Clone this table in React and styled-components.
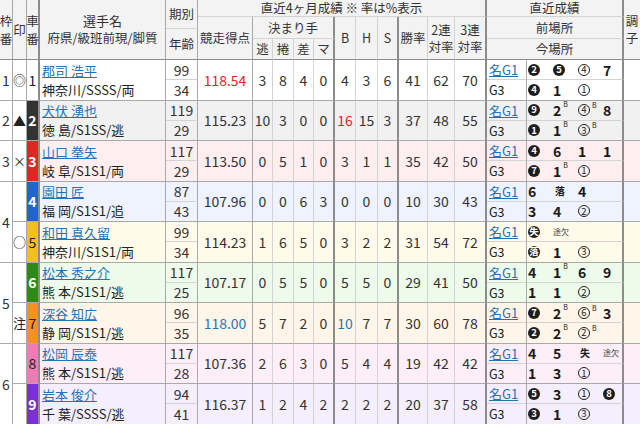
import React from 'react';
import styled, { createGlobalStyle } from 'styled-components';

const GlobalStyle = createGlobalStyle`
  html, body { margin: 0; padding: 0; background: #fff; }
  body { font-family: "Noto Sans CJK JP", "Noto Sans", sans-serif; }
`;

const LINES = { dark: '#8c8c8c', mid: '#a9a9a9', light: '#d3d3d3', none: 'transparent' };

// right border depends on which column the cell ends in
const rightLine = (col) => {
    if ([3, 10, 13, 16, 18].includes(col)) return `2px solid ${LINES.dark}`;
    if ([1, 2, 4, 5, 6, 17].includes(col)) return `1px solid ${LINES.mid}`;
    if (col === 19) return 'none';
    return `1px solid ${LINES.light}`;
};

const CAR = {
    1: { bg: '#ffffff', fg: '#222', bold: false },
    2: { bg: '#333333', fg: '#fff', bold: true },
    3: { bg: '#e3261f', fg: '#fff', bold: true },
    4: { bg: '#2363d1', fg: '#fff', bold: true },
    5: { bg: '#f3c21a', fg: '#222', bold: false },
    6: { bg: '#2e8a17', fg: '#fff', bold: true },
    7: { bg: '#f5931e', fg: '#222', bold: false },
    8: { bg: '#f07cb6', fg: '#222', bold: false },
    9: { bg: '#7a30d2', fg: '#fff', bold: true },
};

const ROW_BG = ['#ffffff', '#f1f1f1', '#ffeef0', '#eef3ff', '#fffaea', '#eefaea', '#fff5e8', '#fdeef7', '#f4eefd'];

const racers = [
    { mark: '◎', name: '郡司 浩平', info: '神奈川/SSSS/両', ki: 99, age: 34, score: '118.54', tone: 'red', kimari: [3, 8, 4, 0], bhs: [4, 3, 6], rates: [41, 62, 70],
      prev: ['●2', '●5', '○4', '7'], cur: ['●4', '1', '○1'] },
    { mark: '▲', name: '犬伏 湧也', info: '徳 島/S1SS/逃', ki: 119, age: 29, score: '115.23', kimari: [10, 3, 0, 0], bhs: [16, 15, 3], bTone: 'red', rates: [37, 48, 55],
      prev: ['●9', '2B', '○4B', '8'], cur: ['●1', '1B', '○3B'] },
    { mark: '×', name: '山口 拳矢', info: '岐 阜/S1S1/両', ki: 117, age: 29, score: '113.50', kimari: [0, 5, 1, 0], bhs: [3, 1, 1], rates: [35, 42, 50],
      prev: ['●4', '6', '1', '1'], cur: ['●7', '1B', '○1'] },
    { mark: '', name: '園田 匠', info: '福 岡/S1S1/追', ki: 87, age: 43, score: '107.96', kimari: [0, 0, 6, 3], bhs: [0, 0, 0], rates: [10, 30, 43],
      prev: ['6', 's落', '4'], cur: ['3', '4', '○2'] },
    { mark: '○', name: '和田 真久留', info: '神奈川/S1S1/両', ki: 99, age: 34, score: '114.23', kimari: [1, 6, 5, 0], bhs: [3, 2, 2], rates: [31, 54, 72],
      prev: ['●失', 't途欠'], cur: ['●落', '1', '○3'] },
    { mark: '', name: '松本 秀之介', info: '熊 本/S1S1/逃', ki: 117, age: 25, score: '107.17', kimari: [0, 5, 5, 0], bhs: [5, 5, 0], rates: [29, 41, 50],
      prev: ['4', '1B', '6', '9'], cur: ['1', '1', '○2'] },
    { mark: '注', name: '深谷 知広', info: '静 岡/S1S1/逃', ki: 96, age: 35, score: '118.00', tone: 'blue', kimari: [5, 7, 2, 0], bhs: [10, 7, 7], bTone: 'blue', rates: [30, 60, 78],
      prev: ['●7', '2B', '○6B', '3'], cur: ['●2', '2B', '○2B'] },
    { mark: '', name: '松岡 辰泰', info: '熊 本/S1S1/逃', ki: 117, age: 28, score: '107.36', kimari: [2, 6, 3, 0], bhs: [5, 4, 4], rates: [19, 42, 42],
      prev: ['4', '5', 's失', 't途欠'], cur: ['1', '3', '○1'] },
    { mark: '', name: '岩本 俊介', info: '千 葉/SSSS/逃', ki: 94, age: 41, score: '116.37', kimari: [1, 2, 4, 2], bhs: [2, 2, 2], rates: [20, 37, 58],
      prev: ['●5', '3', '○1', '●8'], cur: ['●3', '1', '○3'] },
];

const frames = [
    { f: 1, start: 0, n: 1 },
    { f: 2, start: 1, n: 1 },
    { f: 3, start: 2, n: 1 },
    { f: 4, start: 3, n: 2 },
    { f: 5, start: 5, n: 2 },
    { f: 6, start: 7, n: 2 },
];

const TONES = { red: '#e41e1e', blue: '#1f78b8' };

const ResultItem = ({ code }) => {
    let s = code;
    let sup = false;
    if (s.endsWith('B')) { sup = true; s = s.slice(0, -1); }
    let body;
    if (s[0] === '●') body = <Circle $black>{s.slice(1)}</Circle>;
    else if (s[0] === '○') body = <Circle>{s.slice(1)}</Circle>;
    else if (s[0] === 's') body = <SmallWord>{s.slice(1)}</SmallWord>;
    else if (s[0] === 't') body = <TinyWord>{s.slice(1)}</TinyWord>;
    else body = <span>{s}</span>;
    return (
        <Slot>
            {body}
            {sup && <Sup>B</Sup>}
        </Slot>
    );
};

const App = () => {
    return (
        <>
            <GlobalStyle />
            <Board>
                <HeadCell $r={1} $rs={4} $c={1} $bb="dark"><Stack $gap={4}><span>枠</span><span>番</span></Stack></HeadCell>
                <HeadCell $r={1} $rs={4} $c={2} $bb="dark">印</HeadCell>
                <HeadCell $r={1} $rs={4} $c={3} $bb="dark"><Stack $gap={4}><span>車</span><span>番</span></Stack></HeadCell>
                <HeadCell $r={1} $rs={4} $c={4} $bb="dark">
                    <Stack $gap={3}>
                        <HeadTitle>選手名</HeadTitle>
                        <span>府県/級班前現/脚質</span>
                    </Stack>
                </HeadCell>
                <HeadCell $r={1} $rs={2} $c={5}>期別</HeadCell>
                <HeadCell $r={3} $rs={2} $c={5} $bb="dark">年齢</HeadCell>
                <HeadCell $r={1} $c={6} $cs={11}>直近4ヶ月成績 ※ 率は%表示</HeadCell>
                <HeadCell $r={2} $rs={3} $c={6} $bb="dark">競走得点</HeadCell>
                <HeadCell $r={2} $rs={2} $c={7} $cs={4}>決まり手</HeadCell>
                {['逃', '捲', '差', 'マ'].map((t, i) => (
                    <HeadCell key={t} $r={4} $c={7 + i} $bb="dark">{t}</HeadCell>
                ))}
                {['B', 'H', 'S'].map((t, i) => (
                    <HeadCell key={t} $r={2} $rs={3} $c={11 + i} $bb="dark">{t}</HeadCell>
                ))}
                <HeadCell $r={2} $rs={3} $c={14} $bb="dark">勝率</HeadCell>
                <HeadCell $r={2} $rs={3} $c={15} $bb="dark"><Stack $gap={3}><span>2連</span><span>対率</span></Stack></HeadCell>
                <HeadCell $r={2} $rs={3} $c={16} $bb="dark"><Stack $gap={3}><span>3連</span><span>対率</span></Stack></HeadCell>
                <HeadCell $r={1} $c={17} $cs={2}>直近成績</HeadCell>
                <HeadCell $r={2} $rs={2} $c={17} $cs={2}>前場所</HeadCell>
                <HeadCell $r={4} $c={17} $cs={2} $bb="dark">今場所</HeadCell>
                <HeadCell $r={1} $rs={4} $c={19} $bb="dark"><Stack $gap={3}><span>調</span><span>子</span></Stack></HeadCell>

                {frames.map((fr) => (
                    <PlainCell key={`f${fr.f}`} $r={5 + fr.start * 2} $rs={fr.n * 2} $c={1} $bb="mid">{fr.f}</PlainCell>
                ))}

                {racers.map((r, i) => {
                    const top = 5 + i * 2;
                    const no = i + 1;
                    const bg = ROW_BG[i];
                    const car = CAR[no];
                    return (
                        <React.Fragment key={no}>
                            <PlainCell $r={top} $rs={2} $c={2} $bb="mid">
                                <Mark>{r.mark}</Mark>
                            </PlainCell>
                            <CarCell $r={top} $rs={2} $c={3} $bb="mid" $bg={car.bg} $fg={car.fg} $bold={car.bold}>{no}</CarCell>
                            <NameCell $r={top} $rs={2} $c={4} $bb="mid" $bg={bg}>
                                <NameLink href="#">{r.name}</NameLink>
                                <Info>{r.info}</Info>
                            </NameCell>
                            <StatCell $r={top} $c={5} $bg={bg}>{r.ki}</StatCell>
                            <StatCell $r={top + 1} $c={5} $bb="mid" $bg={bg}>{r.age}</StatCell>
                            <StatCell $r={top} $rs={2} $c={6} $bb="mid" $bg={bg} $tone={r.tone}>{r.score}</StatCell>
                            {r.kimari.map((v, k) => (
                                <StatCell key={`k${k}`} $r={top} $rs={2} $c={7 + k} $bb="mid" $bg={bg}>{v}</StatCell>
                            ))}
                            {r.bhs.map((v, k) => (
                                <StatCell key={`b${k}`} $r={top} $rs={2} $c={11 + k} $bb="mid" $bg={bg} $tone={k === 0 ? r.bTone : undefined}>{v}</StatCell>
                            ))}
                            {r.rates.map((v, k) => (
                                <StatCell key={`r${k}`} $r={top} $rs={2} $c={14 + k} $bb="mid" $bg={bg}>{v}</StatCell>
                            ))}
                            <PlaceCell $r={top} $c={17} $bg={bg}>
                                <PlaceLink href="#">名G1</PlaceLink>
                            </PlaceCell>
                            <ResultCell $r={top} $c={18} $bg={bg}>
                                {r.prev.map((c, k) => <ResultItem key={k} code={c} />)}
                            </ResultCell>
                            <PlaceCell $r={top + 1} $c={17} $bb="mid" $bg={bg}>
                                <PlaceText>G3</PlaceText>
                            </PlaceCell>
                            <ResultCell $r={top + 1} $c={18} $bb="mid" $bg={bg}>
                                {r.cur.map((c, k) => <ResultItem key={k} code={c} />)}
                            </ResultCell>
                            <PlainCell $r={top} $rs={2} $c={19} $bb="mid" $bg={bg} />
                        </React.Fragment>
                    );
                })}
            </Board>
        </>
    );
};

const Board = styled.div`
    display: grid;
    grid-template-columns: 13px 14px 13px 126px 32px 55px 20px 21px 20px 21px 21px 22px 21px 29px 27px 32px 40px 97px 16px;
    grid-template-rows: 17px 12px 10px 21px repeat(18, 20.25px);
    width: 640px;
    height: 424px;
    overflow: hidden;
    color: #333;
    font-family: "Noto Sans CJK JP", "Noto Sans", sans-serif;
`;

const Cell = styled.div`
    grid-row: ${(p) => p.$r} / span ${(p) => p.$rs || 1};
    grid-column: ${(p) => p.$c} / span ${(p) => p.$cs || 1};
    box-sizing: border-box;
    min-width: 0;
    min-height: 0;
    display: flex;
    flex-direction: column;
    align-items: center;
    justify-content: center;
    border-right: ${(p) => rightLine(p.$c + (p.$cs || 1) - 1)};
    border-bottom: 1px solid ${(p) => LINES[p.$bb || 'light']};
    background: ${(p) => p.$bg || '#fff'};
    overflow: hidden;
    white-space: nowrap;
`;

const HeadCell = styled(Cell)`
    background: #f3f3f3;
    font-size: 12.5px;
    line-height: 14px;
    color: #333;
    text-align: center;
    overflow: visible;
`;

const Stack = styled.span`
    display: flex;
    flex-direction: column;
    align-items: center;
    gap: ${(p) => p.$gap}px;
`;

const HeadTitle = styled.span`
    font-size: 13px;
`;

const PlainCell = styled(Cell)`
    font-size: 14px;
    color: #333;
`;

const Mark = styled.span`
    font-size: 13px;
    color: #222;
`;

const CarCell = styled(Cell)`
    background: ${(p) => p.$bg};
    color: ${(p) => p.$fg};
    font-weight: ${(p) => (p.$bold ? 'bold' : 'normal')};
    font-size: 14px;
`;

const NameCell = styled(Cell)`
    align-items: flex-start;
    padding-left: 2px;
    line-height: 19px;
`;

const NameLink = styled.a`
    color: #2573b6;
    text-decoration: underline;
    font-size: 13px;
`;

const Info = styled.span`
    color: #222;
    font-size: 13px;
`;

const StatCell = styled(Cell)`
    font-size: 14px;
    color: ${(p) => TONES[p.$tone] || '#333'};
`;

const PlaceCell = styled(Cell)`
    align-items: flex-start;
    padding-left: 2px;
`;

const PlaceLink = styled.a`
    color: #2573b6;
    text-decoration: underline;
    font-size: 13px;
`;

const PlaceText = styled.span`
    color: #222;
    font-size: 12.5px;
`;

const ResultCell = styled(Cell)`
    flex-direction: row;
    justify-content: flex-start;
    padding-left: 1px;
`;

const Slot = styled.span`
    width: 25px;
    flex: none;
    display: inline-flex;
    align-items: center;
    font-size: 14px;
    font-weight: bold;
    color: #1a1a1a;
    line-height: 1;
`;

const Circle = styled.span`
    box-sizing: border-box;
    display: inline-flex;
    align-items: center;
    justify-content: center;
    width: 12px;
    height: 12px;
    border-radius: 50%;
    font-size: 9.5px;
    ${(p) => (p.$black
        ? 'background: #1e1e1e; color: #fff; font-weight: bold;'
        : 'border: 1px solid #222; color: #222; font-weight: normal;')}
`;

const SmallWord = styled.span`
    font-size: 10px;
    font-weight: bold;
    margin-left: 2px;
`;

const TinyWord = styled.span`
    font-size: 8px;
    font-weight: normal;
    color: #333;
`;

const Sup = styled.span`
    font-size: 7px;
    font-weight: normal;
    align-self: flex-start;
    margin-left: 2px;
    margin-top: -2px;
`;

export default App;
